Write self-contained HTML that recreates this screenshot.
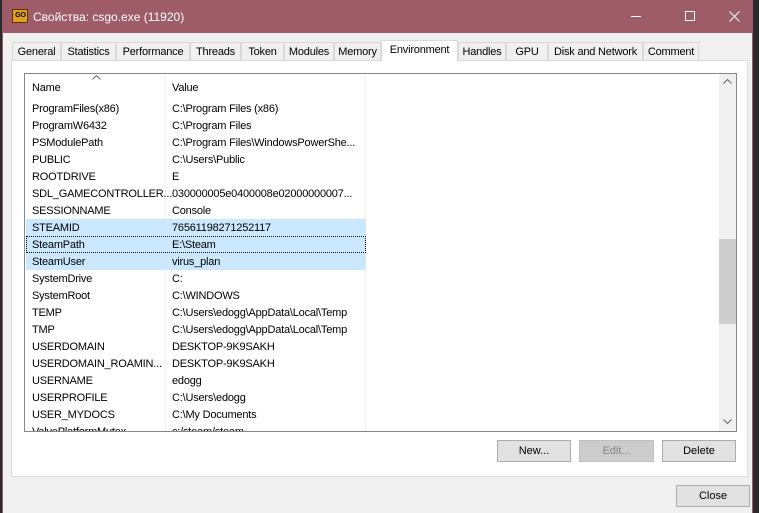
<!DOCTYPE html>
<html><head><meta charset="utf-8"><style>
*{box-sizing:border-box;margin:0;padding:0}
body{width:759px;height:513px;background:#2a2a2a;position:relative;overflow:hidden;font-family:"Liberation Sans","DejaVu Sans",sans-serif;font-size:11px;color:#000}
.win{position:absolute;left:2px;top:0;width:751px;height:513px;background:#f0f0f0;border-left:1px solid #9e5c69;border-right:1px solid #9e5c69}
.title{position:absolute;left:0;top:0;width:100%;height:33px;background:#9e5c69;color:#fff;font-size:12px}
.title .t{position:absolute;left:30px;top:10px}
.ico{position:absolute;left:9px;top:9px;width:16px;height:14px;background:#e0a020;border:1px solid #603000;font-size:7px;color:#000;line-height:12px;text-align:right;padding-right:1px;font-weight:bold}
.tabs{position:absolute;left:9px;top:41px;height:20px}
.tab{position:absolute;top:1px;height:19px;border:1px solid #d9d9d9;border-bottom:none;background:#f0f0f0;font-size:11px;padding-top:3px;text-align:center;letter-spacing:-0.2px}
.tab.a{top:-1px;height:22px;background:#fff;z-index:2}
.panel{position:absolute;left:9px;top:60px;width:737px;height:417px;background:#fff;border:1px solid #d9d9d9}
.list{position:absolute;left:24px;top:73px;width:713px;height:359px;border:1px solid #828790;background:#fff;overflow:hidden;letter-spacing:-0.2px}
.row{position:absolute;left:1px;height:17px;width:340px}
.row span{position:absolute;top:3px;white-space:nowrap}
.sel{background:#cce8ff}
.btn{position:absolute;height:22px;background:#e1e1e1;border:1px solid #adadad;text-align:center;font-size:11px;padding-top:4px}
</style></head><body>
<div class="win">
<div class="title"><div class="ico">GO</div><div class="t">Свойства: csgo.exe (11920)</div>
<div style="position:absolute;left:628px;top:16px;width:10px;height:1px;background:#fff"></div>
<div style="position:absolute;left:682px;top:11px;width:10px;height:10px;border:1px solid #fff"></div>
<svg style="position:absolute;left:726px;top:11px" width="11" height="11"><path d="M0.5 0.5L10.5 10.5M10.5 0.5L0.5 10.5" stroke="#fff" stroke-width="1"/></svg>
</div>
<div class="tabs">
<div class="tab" style="left:0;width:49px">General</div>
<div class="tab" style="left:49px;width:55px">Statistics</div>
<div class="tab" style="left:104px;width:74px">Performance</div>
<div class="tab" style="left:178px;width:51px">Threads</div>
<div class="tab" style="left:229px;width:43px">Token</div>
<div class="tab" style="left:272px;width:50px">Modules</div>
<div class="tab" style="left:322px;width:47px">Memory</div>
<div class="tab a" style="left:369px;width:77px">Environment</div>
<div class="tab" style="left:446px;width:48px">Handles</div>
<div class="tab" style="left:494px;width:42px">GPU</div>
<div class="tab" style="left:536px;width:95px">Disk and Network</div>
<div class="tab" style="left:631px;width:56px">Comment</div>
</div>
</div>
<div class="panel" style="left:11px"></div>
<div class="list">
<div style="position:absolute;left:140px;top:0;width:1px;height:359px;background:#f0f0f0"></div>
<div style="position:absolute;left:340px;top:0;width:1px;height:359px;background:#f0f0f0"></div>
<svg style="position:absolute;left:67px;top:1px" width="9" height="5"><path d="M0.5 4.5L4.5 0.5L8.5 4.5" stroke="#666" fill="none"/></svg>
<div style="position:absolute;left:7px;top:8px">Name</div>
<div style="position:absolute;left:147px;top:8px">Value</div>
<div style="position:absolute;left:694px;top:0;width:17px;height:357px;background:#f0f0f0"></div>
<div style="position:absolute;left:694px;top:165px;width:17px;height:85px;background:#cdcdcd"></div>
<svg style="position:absolute;left:698px;top:5px" width="9" height="5"><path d="M0.5 4.5L4.5 0.5L8.5 4.5" stroke="#606060" fill="none"/></svg>
<svg style="position:absolute;left:698px;top:345px" width="9" height="5"><path d="M0.5 0.5L4.5 4.5L8.5 0.5" stroke="#606060" fill="none"/></svg>
<div id="rows"></div>
</div>
<script>
var d=[["ProgramFiles(x86)","C:\\Program Files (x86)"],["ProgramW6432","C:\\Program Files"],["PSModulePath","C:\\Program Files\\WindowsPowerShe..."],["PUBLIC","C:\\Users\\Public"],["ROOTDRIVE","E"],["SDL_GAMECONTROLLER...","030000005e0400008e02000000007..."],["SESSIONNAME","Console"],["STEAMID","76561198271252117"],["SteamPath","E:\\Steam"],["SteamUser","virus_plan"],["SystemDrive","C:"],["SystemRoot","C:\\WINDOWS"],["TEMP","C:\\Users\\edogg\\AppData\\Local\\Temp"],["TMP","C:\\Users\\edogg\\AppData\\Local\\Temp"],["USERDOMAIN","DESKTOP-9K9SAKH"],["USERDOMAIN_ROAMIN...","DESKTOP-9K9SAKH"],["USERNAME","edogg"],["USERPROFILE","C:\\Users\\edogg"],["USER_MYDOCS","C:\\My Documents"],["ValvePlatformMutex","c:/steam/steam"]];
var h="";d.forEach(function(r,i){var s=(i>=7&&i<=9)?" sel":"";var b=i==8?"outline:1px dotted #000;outline-offset:-1px;":"";h+='<div class="row'+s+'" style="top:'+(26+i*17)+'px;'+b+'"><span style="left:6px">'+r[0]+'</span><span style="left:146px">'+r[1]+'</span></div>';});
document.getElementById("rows").innerHTML=h;
</script>
<div class="btn" style="left:497px;top:440px;width:74px">New...</div>
<div class="btn" style="left:579px;top:440px;width:75px;background:#ccc;border-color:#bfbfbf;color:#838383">Edit...</div>
<div class="btn" style="left:662px;top:440px;width:74px">Delete</div>
<div class="btn" style="left:676px;top:485px;width:74px">Close</div>
</body></html>
